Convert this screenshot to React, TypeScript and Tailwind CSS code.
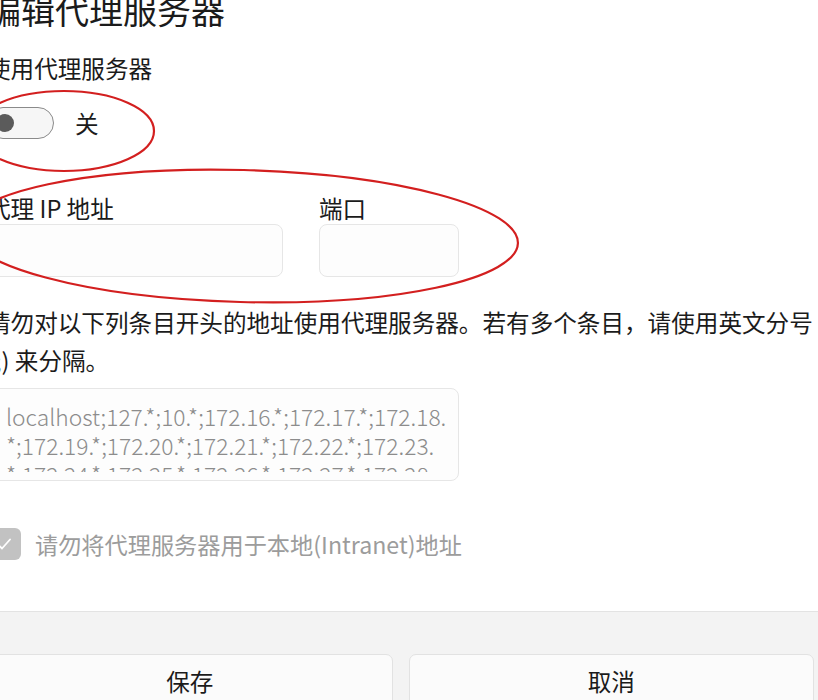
import React from "react";

const font = { fontFamily: '"Noto Sans CJK SC", "Noto Sans", sans-serif' };

const Toggle: React.FC = () => (
  <div className="w-[67px] h-[32px] rounded-full border-[1.5px] border-[#8a8a8a] bg-[#f6f6f6] flex items-center pl-[8px]">
    <div className="w-[18px] h-[18px] rounded-full bg-[#5b5b5b]" />
  </div>
);

const Annotations: React.FC = () => (
  <svg className="absolute inset-0 pointer-events-none" width="818" height="700" viewBox="0 0 818 700">
    <ellipse cx="64" cy="131" rx="90" ry="40" fill="none" stroke="#d31f1f" strokeWidth="2.2" />
    <ellipse
      cx="242"
      cy="236"
      rx="276"
      ry="66"
      fill="none"
      stroke="#d31f1f"
      strokeWidth="2.2"
      transform="rotate(1.5 242 236)"
    />
  </svg>
);

export default function App() {
  return (
    <div className="relative w-[818px] h-[700px] overflow-hidden bg-white text-[#1b1b1b]" style={font}>
      <div className="ml-[-13px] w-[827px] flex flex-col">
        <h1 className="mt-[-7px] text-[34px] leading-[34px] font-normal whitespace-nowrap">编辑代理服务器</h1>

        <div className="mt-[29px] text-[23.6px] leading-[24px]">使用代理服务器</div>

        <div className="mt-[27px] flex items-center gap-[21px]">
          <Toggle />
          <span className="text-[23.6px] leading-[24px]">关</span>
        </div>

        <div className="mt-[57px] flex gap-[36px] w-[472px]">
          <div className="flex flex-col w-[296px]">
            <label className="text-[23.6px] leading-[24px] whitespace-nowrap">代理 IP 地址</label>
            <div className="mt-[4px] h-[53px] rounded-[8px] border border-[#e6e6e6] bg-[#fdfdfd]" />
          </div>
          <div className="flex flex-col w-[140px]">
            <label className="text-[23.6px] leading-[24px]">端口</label>
            <div className="mt-[4px] h-[53px] rounded-[8px] border border-[#e6e6e6] bg-[#fdfdfd]" />
          </div>
        </div>

        <p className="mt-[26px] text-[23.6px] leading-[38px] whitespace-nowrap">
          请勿对以下列条目开头的地址使用代理服务器。若有多个条目，请使用英文分号
          <br />
          (;) 来分隔。
        </p>

        <div className="mt-[9px] w-[472px] h-[93px] rounded-[8px] border border-[#e6e6e6] bg-[#fdfdfd] overflow-hidden">
          <div className="pt-[13px] pl-[18px] h-[83px] overflow-hidden text-[22.8px] leading-[29px] font-light text-[#8c8c8c] whitespace-nowrap">
            <div>localhost;127.*;10.*;172.16.*;172.17.*;172.18.</div>
            <div>*;172.19.*;172.20.*;172.21.*;172.22.*;172.23.</div>
            <div>*;172.24.*;172.25.*;172.26.*;172.27.*;172.28.</div>
          </div>
        </div>

        <div className="mt-[47px] flex items-center gap-[14px]">
          <div className="w-[34px] h-[32px] rounded-[6px] bg-[#c2c2c2] flex items-center justify-center">
            <svg width="20" height="20" viewBox="0 0 20 20" fill="none">
              <path d="M4 10.5l4 4 8-9" stroke="#ffffff" strokeWidth="1.8" strokeLinecap="round" strokeLinejoin="round" />
            </svg>
          </div>
          <span className="text-[23.2px] leading-[24px] text-[#9c9c9c] whitespace-nowrap">
            请勿将代理服务器用于本地(Intranet)地址
          </span>
        </div>
      </div>

      <div className="mt-[51px] border-t border-[#e3e3e3] bg-[#f3f3f3] h-[200px] pt-[42px]">
        <div className="ml-[-13px] w-[827px] flex gap-[16px]">
          <button className="flex-1 h-[54px] rounded-[7px] border border-[#e2e2e2] bg-[#fbfbfb] text-[23.6px] leading-[24px] text-[#1b1b1b]">
            保存
          </button>
          <button className="flex-1 h-[54px] rounded-[7px] border border-[#e2e2e2] bg-[#fbfbfb] text-[23.6px] leading-[24px] text-[#1b1b1b]">
            取消
          </button>
        </div>
      </div>

      <Annotations />
    </div>
  );
}
